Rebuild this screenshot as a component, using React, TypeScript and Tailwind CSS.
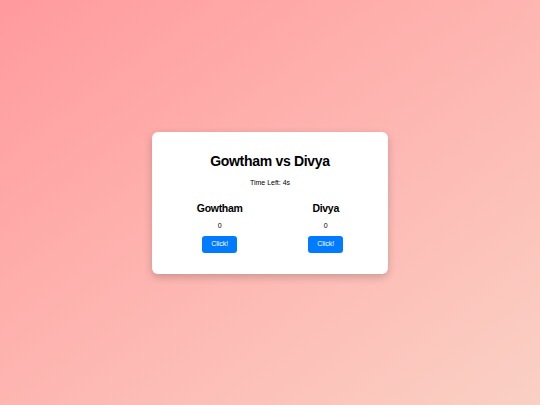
export default function App() {
  return (
    <div className="min-h-screen w-full flex items-center justify-center bg-gradient-to-br from-[#ff9a9e] to-[#fad0c4] font-['Liberation_Sans',Arial,sans-serif]">
      <div className="w-[236px] h-[142px] bg-white rounded-[6px] shadow-[0_3px_8px_rgba(0,0,0,0.2)] px-[12px] pt-[19px] text-center text-black">
        <h1 className="text-[14px] leading-[20px] font-bold tracking-[-0.3px]">Gowtham vs Divya</h1>
        <p className="mt-[7px] text-[7px] leading-[10px]">Time Left: 4s</p>
        <div className="mt-[13px] flex justify-around">
          <div className="flex flex-col items-center">
            <h2 className="text-[10.5px] leading-[14px] font-bold tracking-[-0.3px]">Gowtham</h2>
            <p className="mt-[6px] text-[7px] leading-[9px]">0</p>
            <button className="mt-[6px] w-[35px] h-[17px] bg-[#007bff] text-white text-[7px] rounded-[3px]">Click!</button>
          </div>
          <div className="flex flex-col items-center">
            <h2 className="text-[10.5px] leading-[14px] font-bold tracking-[-0.3px]">Divya</h2>
            <p className="mt-[6px] text-[7px] leading-[9px]">0</p>
            <button className="mt-[6px] w-[35px] h-[17px] bg-[#007bff] text-white text-[7px] rounded-[3px]">Click!</button>
          </div>
        </div>
      </div>
    </div>
  );
}
